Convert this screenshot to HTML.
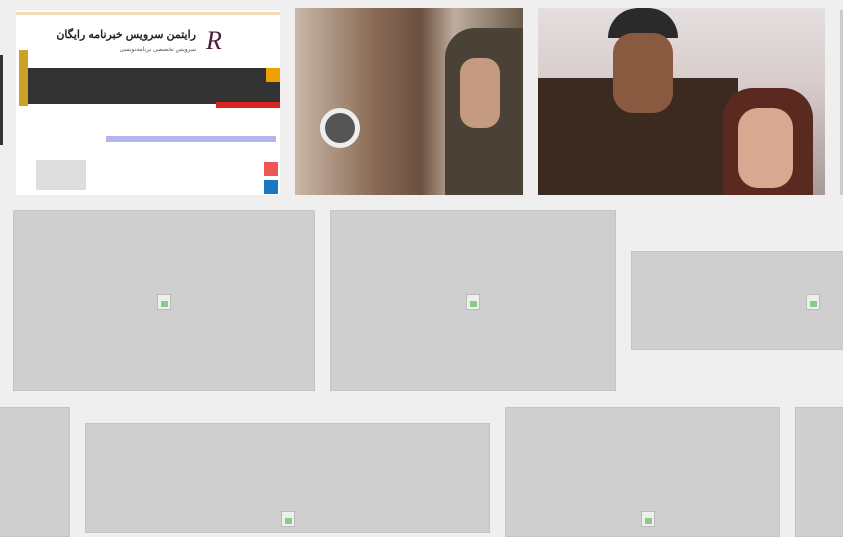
<!DOCTYPE html><html><head><style>
body{margin:0;width:843px;height:531px;background:#efefef;position:relative;overflow:hidden;font-family:"Liberation Sans","Noto Sans CJK SC",sans-serif}
.a{position:absolute}
.g{position:absolute;background:#cfcfcf;border:1px solid #c4c4c4;box-sizing:border-box}
.ic{position:absolute;width:14px;height:16px;border:1px solid #bbb;background:#eee;box-sizing:border-box}
.ic:after{content:"";position:absolute;left:3px;top:6px;width:7px;height:6px;background:#8c8;}
</style></head><body>
<div class="a" style="left:0;top:55px;width:3px;height:90px;background:#333"></div>
<div class="a" style="left:16px;top:10px;width:264px;height:185px;background:#fff;overflow:hidden">
 <div class="a" style="left:0;top:2px;width:264px;height:3px;background:#f3dcb5"></div>
 <div class="a" style="left:30px;top:18px;font-size:11px;font-weight:bold;color:#222;direction:rtl;width:150px;white-space:nowrap;text-align:right">رایتمن سرویس خبرنامه رایگان</div>
 <div class="a" style="left:30px;top:36px;font-size:6px;color:#555;direction:rtl;width:150px;white-space:nowrap;text-align:right">سرویس تخصصی برنامه‌نویسی</div>
 <div class="a" style="left:190px;top:16px;font-size:26px;color:#4a1e3a;font-family:'Liberation Serif';font-style:italic">R</div>
 <div class="a" style="left:3px;top:40px;width:9px;height:56px;background:#c9a227"></div>
 <div class="a" style="left:12px;top:58px;width:252px;height:36px;background:#333"></div>
 <div class="a" style="left:250px;top:58px;width:14px;height:14px;background:#f0a000"></div>
 <div class="a" style="left:200px;top:92px;width:64px;height:6px;background:#d22"></div>
 <div class="a" style="left:90px;top:126px;width:170px;height:6px;background:#6a6ae0;opacity:.5"></div>
 <div class="a" style="left:20px;top:150px;width:50px;height:30px;background:#ddd"></div>
 <div class="a" style="left:248px;top:152px;width:14px;height:14px;background:#e55"></div>
 <div class="a" style="left:248px;top:170px;width:14px;height:14px;background:#1a78c2"></div>
</div>
<div class="a" style="left:295px;top:8px;width:228px;height:187px;background:linear-gradient(90deg,#c9b8a8 0,#8a6a55 35%,#6b5040 55%,#bfae9e 70%,#6a5a4a 100%)">
 <div class="a" style="left:150px;top:20px;width:78px;height:167px;background:#4a4236;border-radius:30px 0 0 0"></div>
 <div class="a" style="left:165px;top:50px;width:40px;height:70px;background:#c49a80;border-radius:15px"></div>
 <div class="a" style="left:25px;top:100px;width:40px;height:40px;border-radius:50%;border:5px solid #eee;background:#555;box-sizing:border-box"></div>
</div>
<div class="a" style="left:538px;top:8px;width:287px;height:187px;background:linear-gradient(#e4dede,#d8cccc 40%,#a89898)">
 <div class="a" style="left:0;top:70px;width:200px;height:117px;background:#3a2a20"></div>
 <div class="a" style="left:70px;top:0;width:70px;height:30px;background:#2a2a2a;border-radius:30px 30px 0 0"></div>
 <div class="a" style="left:75px;top:25px;width:60px;height:80px;background:#8a5a40;border-radius:20px"></div>
 <div class="a" style="left:185px;top:80px;width:90px;height:107px;background:#5a2a20;border-radius:30px 30px 0 0"></div>
 <div class="a" style="left:200px;top:100px;width:55px;height:80px;background:#d8a890;border-radius:20px"></div>
</div>
<div class="a" style="left:840px;top:10px;width:3px;height:185px;background:#ccc"></div>
<div class="g" style="left:13px;top:210px;width:302px;height:181px"></div><div class="ic" style="left:157px;top:294px"></div>
<div class="g" style="left:330px;top:210px;width:286px;height:181px"></div><div class="ic" style="left:466px;top:294px"></div>
<div class="g" style="left:631px;top:251px;width:220px;height:99px"></div><div class="ic" style="left:806px;top:294px"></div>
<div class="g" style="left:-2px;top:407px;width:72px;height:130px"></div>
<div class="g" style="left:85px;top:423px;width:405px;height:110px"></div><div class="ic" style="left:281px;top:511px"></div>
<div class="g" style="left:505px;top:407px;width:275px;height:130px"></div><div class="ic" style="left:641px;top:511px"></div>
<div class="g" style="left:795px;top:407px;width:60px;height:130px"></div>
</body></html>
